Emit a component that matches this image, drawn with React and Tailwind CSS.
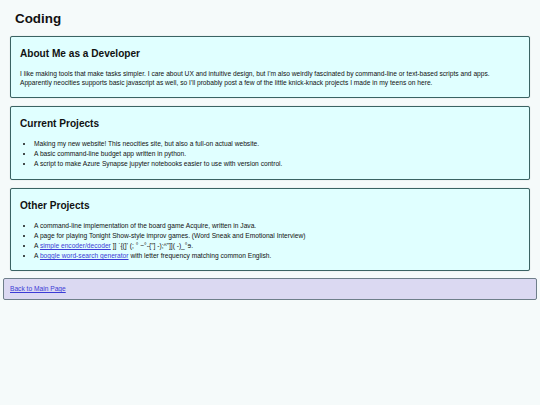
import React from 'react';

// ── Page data ────────────────────────────────────────────────────────────────

const CURRENT = [
  'Making my new website! This neocities site, but also a full-on actual website.',
  'A basic command-line budget app written in python.',
  'A script to make Azure Synapse jupyter notebooks easier to use with version control.',
];

function Section({ title, children, tight }) {
  return (
    <section
      className={
        tight
          ? 'mx-[10px] rounded-[2px] border border-[#3a6363] bg-[#e0ffff] px-[9px] pt-[10px] pb-[9px] shadow-[0_0_1px_rgba(0,0,0,0.3)]'
          : 'mx-[10px] rounded-[2px] border border-[#3a6363] bg-[#e0ffff] px-[9px] pt-[10px] pb-[10px] shadow-[0_0_1px_rgba(0,0,0,0.3)]'
      }
    >
      <h2 className="mb-[9px] text-[10.1px] font-bold leading-[13px] text-[#111]">{title}</h2>
      {children}
    </section>
  );
}

function Bullets({ children }) {
  return <ul className="list-disc pl-[14px] text-[6.65px] leading-[10.2px] text-[#111]">{children}</ul>;
}

const linkCls = 'text-[#3b3bd6] underline';

export default function App() {
  return (
    <div
      className="min-h-[405px] w-[540px] bg-[#f5fafa] pb-4"
      style={{ fontFamily: '"Liberation Sans", Arial, sans-serif' }}
    >
      <h1 className="px-[15px] pt-[11px] pb-[10px] text-[13.4px] font-bold leading-[15px] text-[#111]">Coding</h1>

      <div className="flex flex-col gap-[8px]">
        <Section title="About Me as a Developer">
          <p className="text-[6.65px] leading-[9px] text-[#111]">
            I like making tools that make tasks simpler. I care about UX and intuitive design, but I'm also weirdly
            fascinated by command-line or text-based scripts and apps.
            <br />
            Apparently neocities supports basic javascript as well, so I'll probably post a few of the little
            knick-knack projects I made in my teens on here.
          </p>
        </Section>

        <Section title="Current Projects" tight>
          <Bullets>
            {CURRENT.map((t) => (
              <li key={t}>{t}</li>
            ))}
          </Bullets>
        </Section>

        <Section title="Other Projects" tight>
          <Bullets>
            <li>A command-line implementation of the board game Acquire, written in Java.</li>
            <li>A page for playing Tonight Show-style improv games. (Word Sneak and Emotional Interview)</li>
            <li>
              A <a href="#" className={linkCls}>simple encoder/decoder</a> ]] `{'{'}(]' (; ° ~°-{'{'}"] -);^"]]( -)_°ɘ.
            </li>
            <li>
              A <a href="#" className={linkCls}>boggle word-search generator</a> with letter frequency matching common
              English.
            </li>
          </Bullets>
        </Section>

        <footer className="mx-[3px] mt-[-1px] rounded-[2px] border border-[#6e7f8a] bg-[#dbd9f2] px-[6px] py-[6px] text-[6.65px] leading-[8px]">
          <a href="#" className="text-[#3b3bd6] underline">
            Back to Main Page
          </a>
        </footer>
      </div>
    </div>
  );
}
